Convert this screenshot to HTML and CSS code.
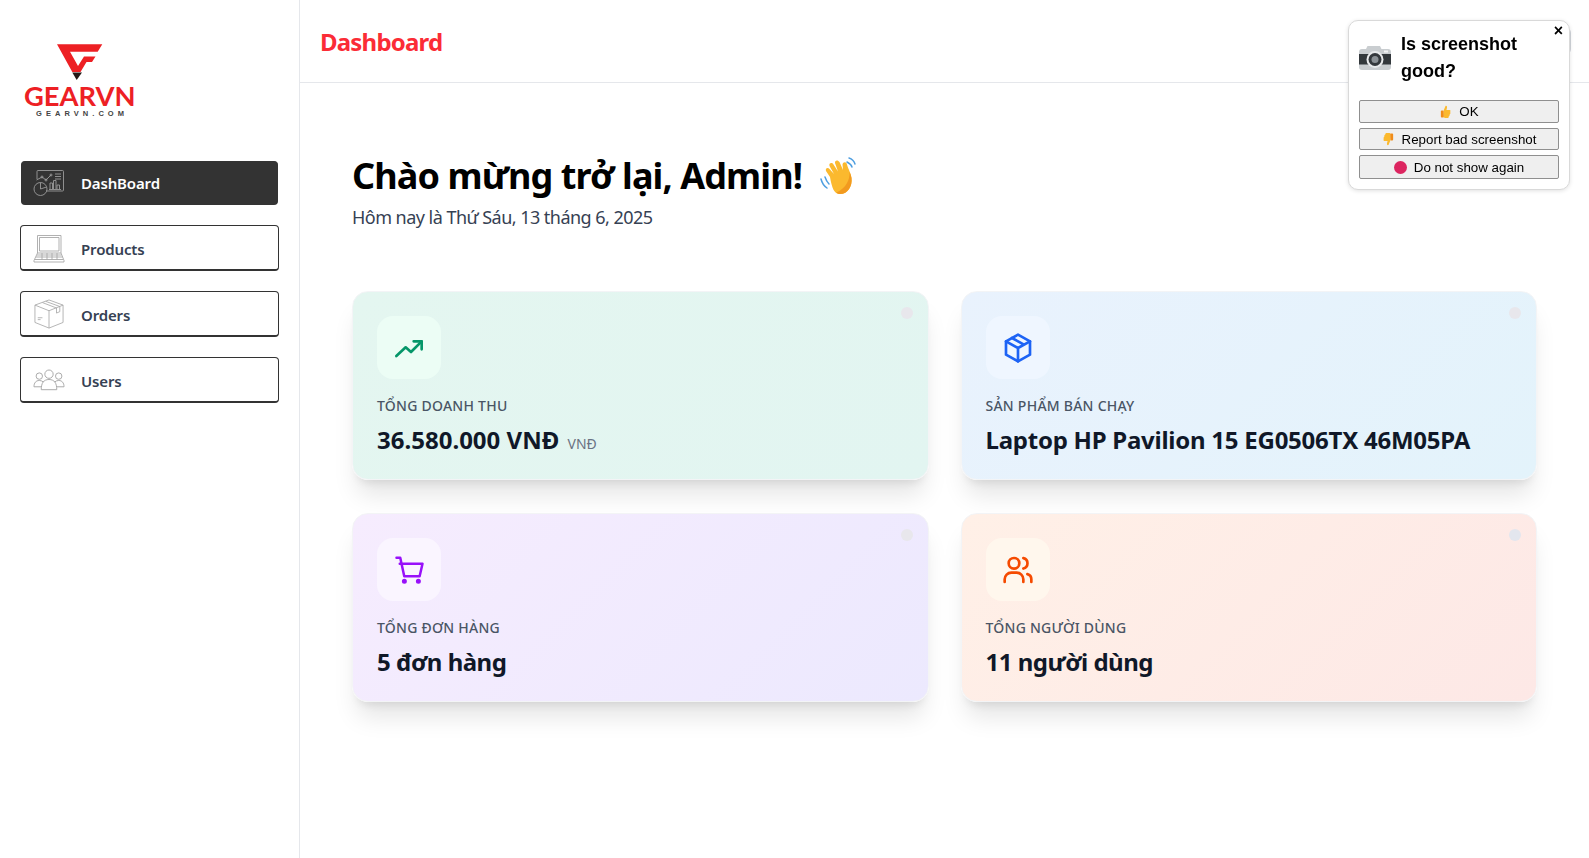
FILE: index.html
```html
<!DOCTYPE html>
<html lang="vi">
<head>
    <meta charset="UTF-8">
    <meta name="viewport" content="width=device-width, initial-scale=1.0">
    <title>GEARVN - Dashboard</title>
    <link rel="stylesheet" href="styles.css">
</head>
<body>

<aside class="sidebar">
    <div class="logo">
        <svg width="112" height="76" viewBox="0 0 112 76">
            <path d="M33 1.300H78.300L73.700 8.700H46L54 23L60 13.500H71.500L68 19H62.500L56.500 29H48.300Z" fill="#ed2024"/>
            <path d="M48.300 29.500H58L52.700 37Z" fill="#231815"/>
            <text class="logo-name" x="0" y="63" textLength="111.500" lengthAdjust="spacingAndGlyphs">GEARVN</text>
            <text class="logo-site" x="12" y="73" textLength="88" lengthAdjust="spacing">GEARVN.COM</text>
        </svg>
    </div>
    <nav class="menu">
        <a class="menu-item active" href="#">
            <svg class="menu-icon" viewBox="0 0 32 28" fill="none" stroke="#9a9a9a" stroke-width="0.900">
                <path d="M4 10V2.500A1 1 0 0 1 5 1.500H29.500A1 1 0 0 1 30.500 2.500V21A1 1 0 0 1 29.500 22H13"/>
                <path d="M3.500 11L9 8L13 11L18 6"/>
                <circle cx="9" cy="8" r="1"/><circle cx="13" cy="11" r="1"/><circle cx="18" cy="6" r="1"/>
                <path d="M22 5H28M22 7.500H28M22 10H28"/>
                <path d="M17 20V14H19.500V20M20.500 20V11.500H23V20M24 20V16H26.500V20M16 20.500H28"/>
                <circle cx="7.500" cy="20" r="6.500"/>
                <path d="M7.500 13.500V20L13.500 18"/>
            </svg>
            <span>DashBoard</span>
        </a>
        <a class="menu-item" href="#">
            <svg class="menu-icon" viewBox="0 0 32 28" fill="none" stroke="#a8a8a8" stroke-width="0.900">
                <path d="M4.500 19V1.500H28V19"/>
                <path d="M6.500 17V3.500H26V17H6.500"/>
                <path d="M4.500 19H28L31 26.500V28H1V26.500Z"/>
                <path d="M4 21H28.500M3 23H29.500M2 25.500H30M9 19V25.500M14 19V25.500M19 19V25.500M24 19V25.500"/>
            </svg>
            <span>Products</span>
        </a>
        <a class="menu-item" href="#">
            <svg class="menu-icon" viewBox="0 0 32 32" fill="none" stroke="#a8a8a8" stroke-width="0.900">
                <path d="M16 1L31 6.500V25L16 31L1 25V6.500Z"/>
                <path d="M1 6.500L16 12.500L31 6.500M16 12.500V31"/>
                <path d="M9 3.800L24 9.600V15L27.500 13.500V8L12.500 2.500"/>
                <path d="M4 20H9M4 22H7"/>
            </svg>
            <span>Orders</span>
        </a>
        <a class="menu-item" href="#">
            <svg class="menu-icon" viewBox="0 0 33 22" fill="none" stroke="#a8a8a8" stroke-width="1">
                <circle cx="16.500" cy="5" r="4.300"/>
                <path d="M8.500 21C8.500 14 11 10.500 16.500 10.500S24.500 14 24.500 21Z"/>
                <circle cx="6.500" cy="7" r="3.300"/>
                <path d="M8.500 18H1C1 14 3 11.500 6.500 11.500C8 11.500 9.500 12 10.500 13"/>
                <circle cx="26.500" cy="7" r="3.300"/>
                <path d="M24.500 18H32C32 14 30 11.500 26.500 11.500C25 11.500 23.500 12 22.500 13"/>
            </svg>
            <span>Users</span>
        </a>
    </nav>
</aside>

<div class="content">
    <header class="topbar">
        <h1>Dashboard</h1>
        <div class="topbar-user"></div>
    </header>

    <main class="main">
        <div class="welcome">
            <h2>Chào mừng trở lại, Admin!
                <svg class="wave" viewBox="0 0 40 40">
                    <path d="M2 23C3 27 5 30 8 32M6 21C7 24 8 26 10 28" fill="none" stroke="#4f9fe0" stroke-width="1.500" stroke-linecap="round"/>
                    <path d="M30 2C33 3 35 5 36 8M28 6C30 7 32 8 33 11" fill="none" stroke="#4f9fe0" stroke-width="1.500" stroke-linecap="round"/>
                    <path d="M11 21L7 15C6 12 9 11 10.500 13L15 18L10.500 10C9.500 7 13 6 14.500 8.500L19 15.500L16 7C15.500 4 19 3.500 20.500 6L24 14L23.500 8.500C24 5.500 27.500 5.500 28 8.500C29.500 14 32 17 32.500 22C33.500 30 29 38 21 38C15 38 13 32 11 21Z" fill="#fbb92e"/>
                    <path d="M21 38C29 38 33.500 30 32.500 22C32.200 20 31.500 18 30.500 16C31 24 27 32 17.500 36.500C18.500 37.500 19.700 38 21 38Z" fill="#f29a1f"/>
                </svg>
            </h2>
            <p>Hôm nay là Thứ Sáu, 13 tháng 6, 2025</p>
        </div>

        <div class="cards">
            <div class="card card-green">
                <span class="dot dot-rose"></span>
                <div class="card-icon">
                    <svg viewBox="0 0 24 24" fill="none" stroke="#059669" stroke-width="2" stroke-linecap="round" stroke-linejoin="round" width="32" height="32">
                        <path d="M2.500 18L9.500 11.500L13.500 15L21.500 7"/>
                        <path d="M15.500 7H21.500V13"/>
                    </svg>
                </div>
                <div class="card-label">Tổng doanh thu</div>
                <div class="card-value">36.580.000 VNĐ <small>VNĐ</small></div>
            </div>

            <div class="card card-blue">
                <span class="dot dot-rose"></span>
                <div class="card-icon">
                    <svg viewBox="0 0 24 24" fill="none" stroke="#1d63f5" stroke-width="2" stroke-linecap="round" stroke-linejoin="round" width="32" height="32">
                        <path d="M12 2L21 7V17L12 22L3 17V7Z"/>
                        <path d="M3 7L12 12L21 7M12 12V22M7.500 4.500L16.500 9.500"/>
                    </svg>
                </div>
                <div class="card-label">Sản phẩm bán chạy</div>
                <div class="card-value">Laptop HP Pavilion 15 EG0506TX 46M05PA</div>
            </div>

            <div class="card card-purple">
                <span class="dot dot-rose"></span>
                <div class="card-icon">
                    <svg viewBox="0 0 24 24" fill="#9810fa" stroke="#9810fa" stroke-width="2" stroke-linecap="round" stroke-linejoin="round" width="30" height="30">
                        <path d="M2 2.200H5L8.200 17H20.500L22.800 7H4.600" fill="none"/>
                        <circle cx="8.300" cy="21" r="1"/>
                        <circle cx="19.500" cy="21" r="1"/>
                    </svg>
                </div>
                <div class="card-label">Tổng đơn hàng</div>
                <div class="card-value">5 đơn hàng</div>
            </div>

            <div class="card card-orange">
                <span class="dot dot-blue"></span>
                <div class="card-icon">
                    <svg viewBox="0 0 24 24" fill="none" stroke="#f54a00" stroke-width="2" stroke-linecap="round" stroke-linejoin="round" width="32" height="32">
                        <circle cx="9" cy="7" r="4"/>
                        <path d="M2 21V19A5 5 0 0 1 7 14H11A5 5 0 0 1 16 19V21"/>
                        <path d="M16 3.100A4 4 0 0 1 16 10.900"/>
                        <path d="M22 21V19A4 4 0 0 0 19 15.100"/>
                    </svg>
                </div>
                <div class="card-label">Tổng người dùng</div>
                <div class="card-value">11 người dùng</div>
            </div>
        </div>
    </main>
</div>

<div class="popup">
    <button class="popup-close" type="button">×</button>
    <div class="popup-head">
        <svg class="camera" viewBox="0 0 32 26">
            <path d="M3 4H7L8.500 1H21L22.500 4H29A3 3 0 0 1 32 7V22A3 3 0 0 1 29 25H3A3 3 0 0 1 0 22V7A3 3 0 0 1 3 4Z" fill="#c9cdd0"/>
            <rect x="0" y="9" width="32" height="10.500" fill="#33383c"/>
            <circle cx="16" cy="14.500" r="8.500" fill="#e8eaec"/>
            <circle cx="16" cy="14.500" r="6.500" fill="#33383c"/>
            <circle cx="16" cy="14.500" r="3.500" fill="#8a9095"/>
            <rect x="25" y="5.500" width="4" height="2" fill="#f3f4f5"/>
        </svg>
        <div class="popup-title">Is screenshot good?</div>
    </div>
    <button class="popup-btn btn-ok" type="button">
        <svg class="btn-icon" viewBox="0 0 14 14">
            <path d="M5 6L7 1C8.500 0.500 9 2 8.500 3.500L8 5.500H11.500C12.500 5.500 12.700 7 12 7.500C12.700 8.500 12.300 9.500 11.500 10C11.700 11 11.200 12 10.500 12.300C10.500 13.300 10 14 9 14H6.500C5.500 14 5 13.500 4.500 13Z" fill="#fbb92e"/>
            <rect x="2" y="6" width="3" height="7.500" rx="1" fill="#f08c1a"/>
        </svg>
        OK
    </button>
    <button class="popup-btn btn-bad" type="button">
        <svg class="btn-icon" viewBox="0 0 14 14">
            <path d="M9 8L7 13C5.500 13.500 5 12 5.500 10.500L6 8.500H2.500C1.500 8.500 1.300 7 2 6.500C1.300 5.500 1.700 4.500 2.500 4C2.300 3 2.800 2 3.500 1.700C3.500 0.700 4 0 5 0H7.500C8.500 0 9 0.500 9.500 1Z" fill="#fbb92e"/>
            <rect x="9" y="0.500" width="3" height="7.500" rx="1" fill="#f08c1a"/>
        </svg>
        Report bad screenshot
    </button>
    <button class="popup-btn btn-never" type="button">
        <span class="stop-dot"></span>
        Do not show again
    </button>
</div>

</body>
</html>
```
FILE: styles.css
```css
* {
    box-sizing: border-box;
}
html, body {
    height: 100%;
}
body {
    font-family: "Noto Sans", "Open Sans", sans-serif;
    margin: 0;
    background-color: #fff;
    display: flex;
    overflow: hidden;
}

/* sidebar */
.sidebar {
    width: 300px;
    flex-shrink: 0;
    border-right: 1px solid #e5e7eb;
    padding: 43px 20px 0;
}
.logo {
    height: 118px;
    padding-left: 4px;
}
.logo svg {
    display: block;
}
.logo-name {
    font-family: "Lato", sans-serif;
    font-size: 27px;
    font-weight: bold;
    fill: #ed2024;
}
.logo-site {
    font-family: "Liberation Sans", sans-serif;
    font-size: 7.500px;
    font-weight: bold;
    fill: #444;
}
.menu {
    display: flex;
    flex-direction: column;
    gap: 20px;
}
.menu-item {
    display: flex;
    align-items: center;
    height: 46px;
    padding-left: 12px;
    border: 1px solid #333;
    border-bottom-width: 2px;
    border-radius: 4px;
    color: #364153;
    font-size: 15px;
    font-weight: 600;
    letter-spacing: -0.15px;
    text-decoration: none;
}
.menu-item span {
    margin-left: 16px;
    padding-top: 2px;
}
.menu-item.active {
    height: 44px;
    margin: 0 1px;
    padding-left: 11px;
    background-color: #333;
    color: #fff;
}
.menu-item.active span {
    padding-top: 0;
}
.menu-icon {
    width: 32px;
    height: 30px;
    flex-shrink: 0;
}

/* top bar */
.content {
    flex: 1;
    min-width: 0;
}
.topbar {
    height: 83px;
    border-bottom: 1px solid #e5e7eb;
    display: flex;
    align-items: center;
    justify-content: space-between;
    padding: 0 18px 0 20px;
}
.topbar h1 {
    margin: 0;
    color: #fb2c36;
    font-size: 24px;
    font-weight: 700;
    letter-spacing: -0.8px;
}
.topbar-user {
    width: 120px;
    height: 28px;
    border: 1px solid #d1d5db;
    border-radius: 6px;
}

/* main */
.main {
    padding: 67px 52px 0;
}
.welcome {
    margin-bottom: 60px;
}
.welcome h2 {
    margin: 0;
    color: #000;
    font-size: 36px;
    line-height: 52px;
    font-weight: 700;
    letter-spacing: -0.9px;
    display: flex;
    align-items: center;
    gap: 17px;
}
.wave {
    width: 40px;
    height: 40px;
}
.welcome p {
    margin: 1px 0 0;
    color: #364153;
    font-size: 18px;
    line-height: 28px;
    letter-spacing: -0.53px;
}
.cards {
    display: grid;
    grid-template-columns: 1fr 1fr;
    column-gap: 32px;
    row-gap: 33px;
}
.card {
    position: relative;
    height: 189px;
    padding: 24px;
    border: 1px solid #f3f4f6;
    border-radius: 16px;
    box-shadow: 0 20px 25px -5px rgba(0, 0, 0, 0.1), 0 8px 10px -6px rgba(0, 0, 0, 0.1);
}
.card-green {
    background: linear-gradient(135deg, #e4f6f0, #e2f5f1);
}
.card-blue {
    background: linear-gradient(135deg, #e9f2fd, #e3f3fb);
}
.card-purple {
    background: linear-gradient(135deg, #f6ecfe, #ece9fe);
}
.card-orange {
    background: linear-gradient(135deg, #fff0e7, #fde8e6);
}
.dot {
    position: absolute;
    top: 15px;
    right: 15px;
    width: 12px;
    height: 12px;
    border-radius: 50%;
}
.dot-rose {
    background-color: #e8e7ec;
}
.dot-blue {
    background-color: #e3e6ee;
}
.card-icon {
    width: 64px;
    height: 63px;
    border-radius: 16px;
    display: flex;
    align-items: center;
    justify-content: center;
}
.card-green .card-icon {
    background-color: #ecfdf5;
}
.card-blue .card-icon {
    background-color: #eff6ff;
}
.card-purple .card-icon {
    background-color: #faf5ff;
}
.card-orange .card-icon {
    background-color: #fff7ed;
}
.card-label {
    margin-top: 17px;
    color: #4a5565;
    font-size: 14px;
    line-height: 20px;
    font-weight: 500;
    letter-spacing: 0.25px;
    text-transform: uppercase;
}
.card-value {
    margin-top: 8px;
    color: #101828;
    font-size: 24px;
    line-height: 32px;
    font-weight: 700;
    letter-spacing: -0.5px;
}
.card-green .card-value {
    letter-spacing: 0;
}
.card-blue .card-value {
    letter-spacing: -0.25px;
}
.card-value small {
    margin-left: 2px;
    color: #6a7282;
    font-size: 14px;
    font-weight: 400;
}

/* screenshot feedback popup */
.popup {
    position: fixed;
    top: 20px;
    left: 1348px;
    width: 222px;
    height: 170px;
    padding: 10px;
    background-color: #fff;
    border: 1px solid #d9d9d9;
    border-radius: 10px;
    box-shadow: 0 1px 4px rgba(0, 0, 0, 0.12);
    font-family: "Liberation Sans", Arial, sans-serif;
}
.popup-close {
    position: absolute;
    top: 1px;
    right: 6px;
    padding: 0;
    border: none;
    background: none;
    color: #000;
    font-family: "Liberation Sans", Arial, sans-serif;
    font-size: 16px;
    line-height: 18px;
    font-weight: bold;
}
.popup-head {
    display: flex;
    align-items: flex-start;
    gap: 10px;
    height: 69px;
}
.camera {
    width: 32px;
    height: 26px;
    margin-top: 14px;
    flex-shrink: 0;
}
.popup-title {
    width: 140px;
    font-size: 18px;
    line-height: 27px;
    font-weight: bold;
    color: #000;
}
.popup-btn {
    display: flex;
    align-items: center;
    justify-content: center;
    gap: 7px;
    width: 200px;
    height: 23px;
    margin-bottom: 5px;
    padding: 0;
    background-color: #efefef;
    border: 1px solid #8f8f8f;
    border-radius: 2px;
    color: #000;
    font-family: "Liberation Sans", Arial, sans-serif;
    font-size: 13.333px;
}
.btn-bad {
    height: 22px;
}
.btn-never {
    height: 24px;
}
.btn-icon {
    width: 13px;
    height: 13px;
}
.stop-dot {
    width: 13px;
    height: 13px;
    border-radius: 50%;
    background-color: #dc2560;
}
```
